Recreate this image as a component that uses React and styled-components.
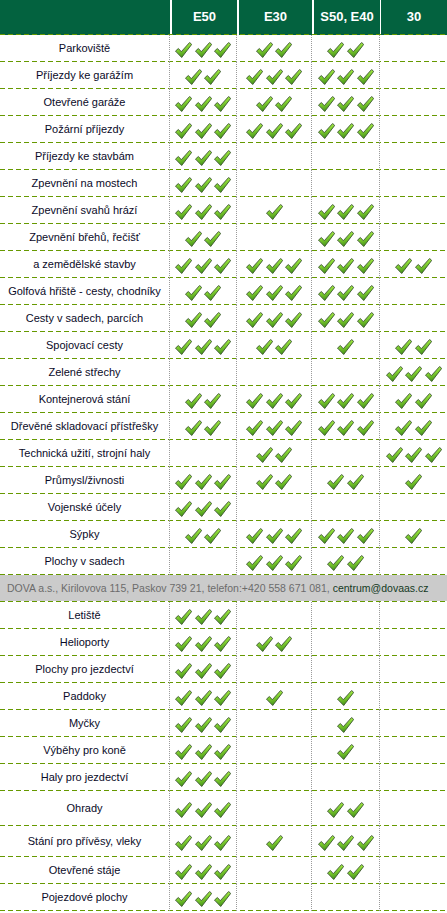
import React from 'react';
import styled, { createGlobalStyle } from 'styled-components';

const COLS = '170px 67px 75px 68px 67px';
const DASH = 'repeating-linear-gradient(to right, #669900 0 5px, transparent 5px 8px)';

const Global = createGlobalStyle`
  html, body { margin: 0; padding: 0; background: #ffffff; }
  body { font-family: "Liberation Sans", Arial, sans-serif; }
`;

const Table = styled.div`
  width: 447px;
`;

const HeaderRow = styled.div`
  position: relative;
  display: grid;
  grid-template-columns: ${COLS};
  height: 35px;
  &::after {
    content: '';
    position: absolute;
    left: 0;
    right: 0;
    bottom: 0;
    height: 1px;
    background: ${DASH};
  }
`;

const HeaderCell = styled.div`
  background: #03623f;
  margin-left: ${(p) => p.$gap || 0}px;
  color: #ffffff;
  font-weight: bold;
  font-size: 13px;
  display: flex;
  align-items: center;
  justify-content: center;
  padding-bottom: 2px;
`;

const Row = styled.div`
  display: grid;
  grid-template-columns: ${COLS};
  height: ${(p) => p.$h || 27}px;
  background: ${DASH} left bottom / 100% 1px no-repeat;
`;

const Cell = styled.div`
  display: flex;
  align-items: center;
  justify-content: center;
  padding-bottom: 1px;
  box-sizing: border-box;
  border-right: ${(p) => (p.$line ? '1px dotted #9a9a9a' : 'none')};
`;

const Label = styled(Cell)`
  font-size: 11px;
  color: #0a0a28;
  text-align: center;
  white-space: nowrap;
`;

const Checks = styled.div`
  display: flex;
  gap: 2.5px;
  margin-top: 3px;
`;

const Footer = styled.div`
  height: 27px;
  box-sizing: border-box;
  display: flex;
  align-items: center;
  padding: 0 0 1px 7px;
  font-size: 10.5px;
  color: #6b6b6b;
  white-space: nowrap;
  background: ${DASH} left bottom / 100% 1px no-repeat,
    linear-gradient(#cbcbcb, #cbcbcb) left top / 100% 26px no-repeat;
`;

const Mail = styled.a`
  color: #153a1f;
  text-decoration: none;
`;

const CheckIcon = () => (
  <svg width="17" height="16" viewBox="0 0 17 16">
    <defs>
      <linearGradient id="chk" x1="0" y1="0" x2="0.3" y2="1">
        <stop offset="0" stopColor="#cdf56a" />
        <stop offset="0.45" stopColor="#8ad834" />
        <stop offset="1" stopColor="#46941a" />
      </linearGradient>
    </defs>
    <path
      d="M0.5 9.1 L3.4 6.5 L6.3 9.7 L14.6 0.5 L16.7 2.4 L6.7 15.5 Z"
      fill="url(#chk)"
      stroke="#3a5530"
      strokeWidth="0.9"
      strokeLinejoin="round"
    />
  </svg>
);

const Marks = ({ n }) =>
  n ? (
    <Checks>
      {Array.from({ length: n }).map((_, i) => (
        <CheckIcon key={i} />
      ))}
    </Checks>
  ) : null;

const SECTION1 = [
  ['Parkoviště', [3, 2, 2, 0]],
  ['Příjezdy ke garážím', [2, 3, 3, 0]],
  ['Otevřené garáže', [3, 2, 3, 0]],
  ['Požární příjezdy', [3, 3, 3, 0]],
  ['Příjezdy ke stavbám', [3, 0, 0, 0]],
  ['Zpevnění na mostech', [3, 0, 0, 0]],
  ['Zpevnění svahů hrází', [3, 1, 3, 0]],
  ['Zpevnění břehů, řečišť', [2, 0, 3, 0]],
  ['a zemědělské stavby', [3, 3, 3, 2]],
  ['Golfová hřiště - cesty, chodníky', [2, 3, 3, 0]],
  ['Cesty v sadech, parcích', [2, 3, 3, 0]],
  ['Spojovací cesty', [3, 2, 1, 2]],
  ['Zelené střechy', [0, 0, 0, 3]],
  ['Kontejnerová stání', [2, 3, 3, 2]],
  ['Dřevěné skladovací přístřešky', [2, 3, 3, 2]],
  ['Technická užití, strojní haly', [0, 2, 0, 3]],
  ['Průmysl/živnosti', [3, 2, 2, 1]],
  ['Vojenské účely', [3, 0, 0, 0]],
  ['Sýpky', [2, 3, 3, 1]],
  ['Plochy v sadech', [0, 3, 2, 0]],
];

const SECTION2 = [
  ['Letiště', [3, 0, 0, 0]],
  ['Helioporty', [3, 2, 0, 0]],
  ['Plochy pro jezdectví', [3, 0, 0, 0]],
  ['Paddoky', [3, 1, 1, 0]],
  ['Myčky', [3, 0, 1, 0]],
  ['Výběhy pro koně', [3, 0, 1, 0]],
  ['Haly pro jezdectví', [3, 0, 0, 0]],
  ['Ohrady', [3, 0, 2, 0], 35],
  ['Stání pro přívěsy, vleky', [3, 1, 3, 0], 31],
  ['Otevřené stáje', [3, 0, 2, 0]],
  ['Pojezdové plochy', [3, 0, 0, 0]],
];

const DataRow = ({ label, marks, h }) => (
  <Row $h={h}>
    <Label $line>{label}</Label>
    {marks.map((n, i) => (
      <Cell key={i} $line={i < 3}>
        <Marks n={n} />
      </Cell>
    ))}
  </Row>
);

export default function App() {
  return (
    <>
      <Global />
      <Table>
        <HeaderRow>
          <HeaderCell />
          <HeaderCell $gap={2}>E50</HeaderCell>
          <HeaderCell $gap={2}>E30</HeaderCell>
          <HeaderCell $gap={2}>S50, E40</HeaderCell>
          <HeaderCell $gap={1}>30</HeaderCell>
        </HeaderRow>
        {SECTION1.map(([l, m, h]) => (
          <DataRow key={l} label={l} marks={m} h={h} />
        ))}
        <Footer>
          DOVA a.s., Kirilovova 115, Paskov 739 21, telefon:+420 558 671 081,&nbsp;
          <Mail href="mailto:centrum@dovaas.cz">centrum@dovaas.cz</Mail>
        </Footer>
        {SECTION2.map(([l, m, h]) => (
          <DataRow key={l} label={l} marks={m} h={h} />
        ))}
      </Table>
    </>
  );
}
